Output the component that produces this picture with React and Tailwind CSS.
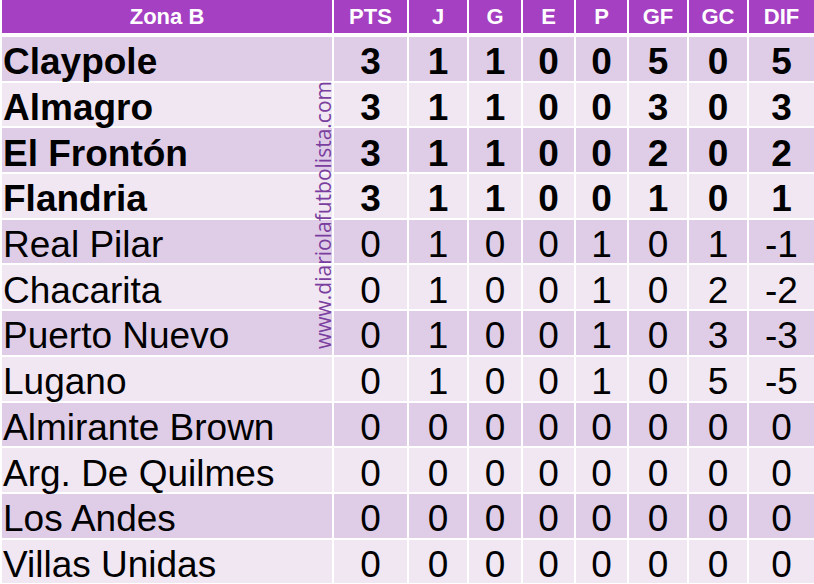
import React from "react";

const rows = [
  ["Claypole", 3, 1, 1, 0, 0, 5, 0, 5, true],
  ["Almagro", 3, 1, 1, 0, 0, 3, 0, 3, true],
  ["El Frontón", 3, 1, 1, 0, 0, 2, 0, 2, true],
  ["Flandria", 3, 1, 1, 0, 0, 1, 0, 1, true],
  ["Real Pilar", 0, 1, 0, 0, 1, 0, 1, -1, false],
  ["Chacarita", 0, 1, 0, 0, 1, 0, 2, -2, false],
  ["Puerto Nuevo", 0, 1, 0, 0, 1, 0, 3, -3, false],
  ["Lugano", 0, 1, 0, 0, 1, 0, 5, -5, false],
  ["Almirante Brown", 0, 0, 0, 0, 0, 0, 0, 0, false],
  ["Arg. De Quilmes", 0, 0, 0, 0, 0, 0, 0, 0, false],
  ["Los Andes", 0, 0, 0, 0, 0, 0, 0, 0, false],
  ["Villas Unidas", 0, 0, 0, 0, 0, 0, 0, 0, false],
];

const headers = ["Zona B", "PTS", "J", "G", "E", "P", "GF", "GC", "DIF"];
const cols = "grid grid-cols-[330px_73px_58px_52px_51px_51px_58px_58px_65px] gap-x-[2px]";

export default function App() {
  return (
    <div
      className="relative w-[814px] h-[584px] overflow-hidden bg-white pl-[2px] flex flex-col gap-[2px]"
      style={{ fontFamily: '"Liberation Sans", Arial, sans-serif' }}
    >
      <div className={`${cols} h-[33px] mb-[2px]`}>
        {headers.map((h) => (
          <div
            key={h}
            className="bg-[#a540c3] text-white font-bold text-[22px] flex items-center justify-center leading-none"
          >
            {h}
          </div>
        ))}
      </div>
      {rows.map((r, i) => {
        const bg = i % 2 === 0 ? "bg-[#dfcde8]" : "bg-[#f0e7f3]";
        const weight = r[9] ? "font-bold" : "font-normal";
        return (
          <div key={r[0]} className={`${cols} h-[43.7px] shrink-0`}>
            <div className={`${bg} ${weight} text-[37px] text-black flex items-center pl-[1px] pt-[6px] leading-none whitespace-nowrap`}>
              {r[0]}
            </div>
            {r.slice(1, 9).map((v, j) => (
              <div
                key={j}
                className={`${bg} ${weight} text-[37px] text-black flex items-center justify-center pt-[6px] leading-none`}
              >
                {v}
              </div>
            ))}
          </div>
        );
      })}
      <div
        className="absolute left-[323px] top-[215px] -translate-x-1/2 -translate-y-1/2 -rotate-90 whitespace-nowrap text-[#7a3e9e] text-[21px] leading-none"
        style={{ fontFamily: '"Open Sans", sans-serif' }}
      >
        www.diariolafutbolista.com
      </div>
    </div>
  );
}
